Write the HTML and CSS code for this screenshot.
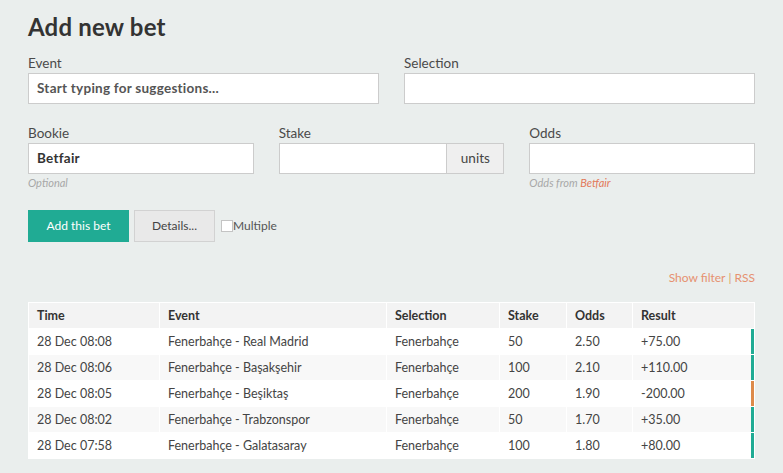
FILE: index.html
```html
<!DOCTYPE html>
<html>
<head>
<meta charset="utf-8">
<link rel="stylesheet" href="styles.css">
</head>
<body>
<div class="page">
  <h1 class="title">Add new bet</h1>
  <div class="row row-2">
    <div class="field">
      <label class="label">Event</label>
      <div class="input input-placeholder">Start typing for suggestions...</div>
    </div>
    <div class="field">
      <label class="label">Selection</label>
      <div class="input"></div>
    </div>
  </div>
  <div class="row row-3">
    <div class="field">
      <label class="label">Bookie</label>
      <div class="input input-value">Betfair</div>
      <div class="help">Optional</div>
    </div>
    <div class="field">
      <label class="label">Stake</label>
      <div class="input-group">
        <div class="input grow"></div>
        <div class="addon">units</div>
      </div>
    </div>
    <div class="field">
      <label class="label">Odds</label>
      <div class="input"></div>
      <div class="help">Odds from <span class="help-link">Betfair</span></div>
    </div>
  </div>
  <div class="actions">
    <button class="btn btn-primary">Add this bet</button>
    <button class="btn btn-default">Details...</button>
    <span class="check"></span><span class="check-label">Multiple</span>
  </div>
  <div class="links"><span class="link">Show filter</span><span class="sep">|</span><span class="link">RSS</span></div>
  <table class="bets">
    <colgroup>
      <col class="c-time"><col class="c-event"><col class="c-sel"><col class="c-stake"><col class="c-odds"><col class="c-result">
    </colgroup>
    <thead>
      <tr><th>Time</th><th>Event</th><th>Selection</th><th>Stake</th><th>Odds</th><th>Result</th></tr>
    </thead>
    <tbody>
      <tr><td>28 Dec 08:08</td><td>Fenerbahçe - Real Madrid</td><td>Fenerbahçe</td><td>50</td><td>2.50</td><td class="win">+75.00</td></tr>
      <tr><td>28 Dec 08:06</td><td>Fenerbahçe - Başakşehir</td><td>Fenerbahçe</td><td>100</td><td>2.10</td><td class="win">+110.00</td></tr>
      <tr><td>28 Dec 08:05</td><td>Fenerbahçe - Beşiktaş</td><td>Fenerbahçe</td><td>200</td><td>1.90</td><td class="loss">-200.00</td></tr>
      <tr><td>28 Dec 08:02</td><td>Fenerbahçe - Trabzonspor</td><td>Fenerbahçe</td><td>50</td><td>1.70</td><td class="win">+35.00</td></tr>
      <tr><td>28 Dec 07:58</td><td>Fenerbahçe - Galatasaray</td><td>Fenerbahçe</td><td>100</td><td>1.80</td><td class="win">+80.00</td></tr>
    </tbody>
  </table>
</div>
</body>
</html>
```
FILE: styles.css
```css
html, body {
  margin: 0;
  padding: 0;
  background: #eaeeed;
}
body {
  font-family: Lato, "Noto Sans", sans-serif;
  color: #444;
}
.page {
  padding: 0 28px;
}
.title {
  margin: 13px 0 0;
  font-size: 24px;
  line-height: 1.2;
  font-weight: 700;
  color: #333;
  letter-spacing: 0.2px;
}
.row {
  display: grid;
  column-gap: 25px;
}
.row-2 {
  grid-template-columns: 1fr 1fr;
  margin-top: 12px;
}
.row-3 {
  grid-template-columns: 1fr 1fr 1fr;
  margin-top: 20px;
}
.label {
  display: block;
  font-size: 13.5px;
  line-height: 18px;
  color: #4a4a4a;
  margin-bottom: 1px;
}
.input {
  box-sizing: border-box;
  height: 31px;
  border: 1px solid #cccccc;
  background: #fff;
  padding: 0 8px;
  font-size: 13.5px;
  line-height: 29px;
  color: #333;
}
.input-placeholder {
  font-weight: 700;
  color: #555;
  letter-spacing: 0.25px;
}
.input-value {
  font-weight: 700;
  color: #333;
  letter-spacing: 0.25px;
}
.input-group {
  display: flex;
}
.grow {
  flex: 1;
}
.addon {
  box-sizing: border-box;
  width: 57px;
  height: 31px;
  border: 1px solid #cccccc;
  border-left: none;
  background: #efefef;
  font-size: 13.5px;
  line-height: 29px;
  text-align: center;
  color: #444;
}
.help {
  margin-top: 2px;
  font-size: 11px;
  line-height: 14px;
  font-style: italic;
  color: #a8a8a8;
}
.help-link {
  color: #e2795a;
}
.actions {
  display: flex;
  align-items: center;
  margin-top: 20px;
}
.btn {
  box-sizing: border-box;
  height: 32px;
  font-family: Lato, "Noto Sans", sans-serif;
  font-size: 12px;
  border: 1px solid transparent;
  padding: 0;
  cursor: pointer;
}
.btn-primary {
  width: 101px;
  background: #20ab94;
  border-color: #20ab94;
  color: #fff;
}
.btn-default {
  width: 81px;
  margin-left: 5px;
  background: #e9e9e9;
  border-color: #d2d2d2;
  color: #444;
}
.check {
  box-sizing: border-box;
  width: 12px;
  height: 12px;
  margin-left: 6px;
  border: 1px solid #c4c4c4;
  background: #fff;
}
.check-label {
  font-size: 12px;
  color: #555;
}
.links {
  margin-top: 28px;
  text-align: right;
  font-size: 12px;
  line-height: 16px;
}
.link {
  color: #e69170;
}
.sep {
  color: #dba064;
  margin: 0 3px;
}
.bets {
  width: 100%;
  margin-top: 16px;
  table-layout: fixed;
  border-collapse: separate;
  border-spacing: 1px;
  background: #fff;
  font-size: 12.5px;
}
.c-time { width: 130px; }
.c-event { width: 226px; }
.c-sel { width: 112px; }
.c-stake { width: 66px; }
.c-odds { width: 65px; }
.bets th {
  background: #f3f3f3;
  text-align: left;
  font-weight: 700;
  color: #333;
  height: 25px;
  padding: 0 8px;
}
.bets td {
  height: 25px;
  padding: 0 8px;
  color: #444;
  background: #fff;
}
.bets tbody tr:nth-child(even) td {
  background: #f8f8f8;
}
.bets td.win {
  border-right: 3px solid #20ab94;
}
.bets td.loss {
  border-right: 3px solid #dd8a4a;
}
```
